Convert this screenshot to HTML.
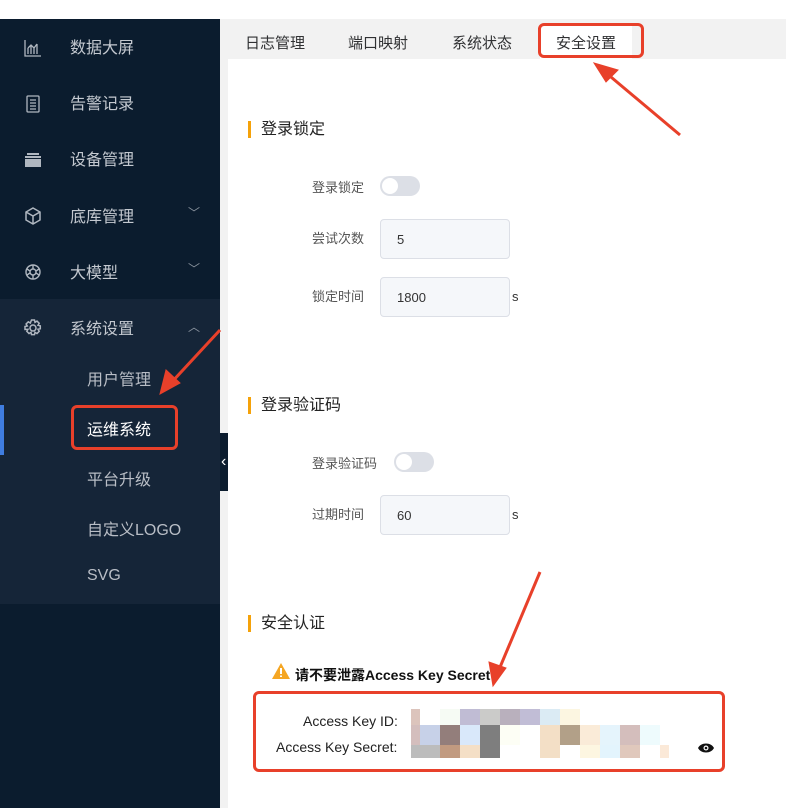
<!DOCTYPE html>
<html><head><meta charset="utf-8"><style>
*{margin:0;padding:0;box-sizing:border-box}
body{width:786px;height:808px;overflow:hidden;position:relative;background:#fff;font-family:"Liberation Sans","Noto Sans CJK SC",sans-serif}
.side{position:absolute;left:0;top:19px;width:220px;height:789px;background:#0b1c2e}
.sub{position:absolute;left:0;top:299px;width:220px;height:305px;background:#152538}
.mi{position:absolute;left:70px;color:#c4c9d0;font-size:16px}
.ic{position:absolute;left:24px;width:18px;height:18px}
.chev{position:absolute;left:188px;color:#8a939e;font-size:12px}
.si{position:absolute;left:87px;color:#b9bec6;font-size:16px}
.main{position:absolute;left:220px;top:19px;width:566px;height:789px;background:#f2f2f2}
.panel{position:absolute;left:228px;top:59px;width:558px;height:749px;background:#fff}
.tab{position:absolute;top:32px;font-size:15px;color:#303133}
.h{position:absolute;left:248px;font-size:16px;color:#222;padding-left:10px;border-left:3px solid #f5a20a;line-height:17px}
.lb{position:absolute;font-size:13px;color:#555}
.sw{position:absolute;width:40px;height:20px;border-radius:10px;background:#dcdfe6}
.sw:after{content:"";position:absolute;left:2px;top:2px;width:16px;height:16px;border-radius:50%;background:#fff}
.in{position:absolute;left:380px;width:130px;height:40px;border:1px solid #dcdfe6;border-radius:4px;background:#f5f7fa;font-size:13px;color:#333;padding:12px 16px}
.red{position:absolute;border:3px solid #e8402a;border-radius:6px}
</style></head><body>
<div class="side"></div><div class="sub"></div>
<div style="position:absolute;left:0;top:405px;width:4px;height:50px;background:#3f7de0"></div>
<svg class="ic" style="top:39px" viewBox="0 0 18 18" fill="none" stroke="#b0b7c0" stroke-width="1.3"><path d="M1 1V17H17M4 15V9M7 15V6M10 15V9M13 15V5M4 9l3-3 3 3 3-4"/></svg>
<span class="mi" style="top:34px">数据大屏</span>
<svg class="ic" style="top:95px" viewBox="0 0 18 18" fill="none" stroke="#b0b7c0" stroke-width="1.3"><rect x="3" y="1" width="12" height="16" rx="1"/><path d="M6 5h6M6 8h6M6 11h6M6 14h6"/></svg>
<span class="mi" style="top:90px">告警记录</span>
<svg class="ic" style="top:151px" viewBox="0 0 18 18" fill="#b0b7c0"><rect x="3" y="2" width="12" height="2"/><rect x="1" y="5" width="16" height="2"/><rect x="1" y="8" width="16" height="8"/></svg>
<span class="mi" style="top:146px">设备管理</span>
<svg class="ic" style="top:207px" viewBox="0 0 18 18" fill="none" stroke="#b0b7c0" stroke-width="1.5"><path d="M9 1l7 4v8l-7 4-7-4V5zM2 5l7 4 7-4M9 9v8"/></svg>
<span class="mi" style="top:203px">底库管理</span><span class="chev" style="top:204px">﹀</span>
<svg class="ic" style="top:263px" viewBox="0 0 18 18" fill="none" stroke="#b0b7c0" stroke-width="1.4"><circle cx="9" cy="9" r="7"/><circle cx="9" cy="9" r="3"/><path d="M9 2v4M15 6l-3 2M15 12l-3-2M9 16v-4M3 12l3-2M3 6l3 2"/></svg>
<span class="mi" style="top:259px">大模型</span><span class="chev" style="top:260px">﹀</span>
<svg class="ic" style="top:319px" viewBox="0 0 18 18" fill="none" stroke="#b0b7c0" stroke-width="1.5"><circle cx="9" cy="9" r="3"/><path d="M7.5 1h3l.5 2.3 2-1.2 2.2 2.2-1.2 2 2.3.5v3l-2.3.5 1.2 2-2.2 2.2-2-1.2-.5 2.3h-3l-.5-2.3-2 1.2-2.2-2.2 1.2-2L1 10.5v-3l2.3-.5-1.2-2 2.2-2.2 2 1.2z"/></svg>
<span class="mi" style="top:315px">系统设置</span><span class="chev" style="top:318px">︿</span>
<span class="si" style="top:366px">用户管理</span>
<span class="si" style="top:416px;color:#fff">运维系统</span>
<span class="si" style="top:466px">平台升级</span>
<span class="si" style="top:516px">自定义LOGO</span>
<span class="si" style="top:567px">SVG</span>
<div class="main"></div>
<div style="position:absolute;left:220px;top:433px;width:15px;height:58px;background:#0b1c2e;color:#fff;font-size:16px;line-height:58px;padding-left:1px">‹</div>
<div class="panel"></div>
<div style="position:absolute;left:540px;top:25px;width:92px;height:34px;background:#fff"></div>
<span class="tab" style="left:245px">日志管理</span>
<span class="tab" style="left:348px">端口映射</span>
<span class="tab" style="left:452px">系统状态</span>
<span class="tab" style="left:556px">安全设置</span>
<div class="red" style="left:538px;top:23px;width:106px;height:35px"></div>
<div class="h" style="top:121px">登录锁定</div>
<span class="lb" style="left:312px;top:177px">登录锁定</span><div class="sw" style="left:380px;top:176px"></div>
<span class="lb" style="left:312px;top:228px">尝试次数</span><div class="in" style="top:219px">5</div>
<span class="lb" style="left:312px;top:286px">锁定时间</span><div class="in" style="top:277px">1800</div><span class="lb" style="left:512px;top:289px;color:#333">s</span>
<div class="h" style="top:397px">登录验证码</div>
<span class="lb" style="left:312px;top:453px">登录验证码</span><div class="sw" style="left:394px;top:452px"></div>
<span class="lb" style="left:312px;top:504px">过期时间</span><div class="in" style="top:495px">60</div><span class="lb" style="left:512px;top:507px;color:#333">s</span>
<div class="h" style="top:615px">安全认证</div>
<svg style="position:absolute;left:272px;top:663px" width="18" height="16" viewBox="0 0 18 16"><path d="M9 0L18 16H0z" fill="#f5a623"/><path d="M9 5v6M9 12.5v1.5" stroke="#fff" stroke-width="2"/></svg>
<span style="position:absolute;left:295px;top:665px;font-size:14px;font-weight:bold;color:#111">请不要泄露Access Key Secret</span>
<div class="red" style="left:253px;top:691px;width:472px;height:81px"></div>
<span style="position:absolute;left:303px;top:713px;font-size:14px;color:#222">Access Key ID:</span>
<span style="position:absolute;left:276px;top:739px;font-size:14px;color:#222">Access Key Secret:</span>
<svg style="position:absolute;left:411px;top:709px" width="260" height="50">
<g><rect x="0" y="0" width="9" height="16" fill="#dcc4bc"/><rect x="29" y="0" width="20" height="16" fill="#f6fbf4"/><rect x="49" y="0" width="20" height="16" fill="#c0bcd4"/><rect x="69" y="0" width="20" height="16" fill="#cbcbc9"/><rect x="89" y="0" width="20" height="16" fill="#b9b0bd"/><rect x="109" y="0" width="20" height="16" fill="#c1bdd6"/><rect x="129" y="0" width="20" height="16" fill="#dbebf4"/><rect x="149" y="0" width="20" height="16" fill="#fcf6e1"/>
<rect x="0" y="16" width="9" height="20" fill="#d4bebd"/><rect x="9" y="16" width="20" height="20" fill="#c7d1e8"/><rect x="29" y="16" width="20" height="20" fill="#937e7b"/><rect x="49" y="16" width="20" height="20" fill="#d9e8fa"/><rect x="69" y="16" width="20" height="20" fill="#7e7e7e"/><rect x="89" y="16" width="20" height="20" fill="#fdfef5"/><rect x="129" y="16" width="20" height="20" fill="#f3dfc6"/><rect x="149" y="16" width="20" height="20" fill="#b2a088"/><rect x="169" y="16" width="20" height="20" fill="#faebd8"/><rect x="189" y="16" width="20" height="20" fill="#e5f4fc"/><rect x="209" y="16" width="20" height="20" fill="#d4bebc"/><rect x="229" y="16" width="20" height="20" fill="#eefbfd"/>
<rect x="0" y="36" width="29" height="13" fill="#bcbcbc"/><rect x="29" y="36" width="20" height="13" fill="#c19a80"/><rect x="49" y="36" width="20" height="13" fill="#f4dfc6"/><rect x="69" y="36" width="20" height="13" fill="#7e7e7e"/><rect x="129" y="36" width="20" height="13" fill="#f3dfc6"/><rect x="169" y="36" width="20" height="13" fill="#fdf6e1"/><rect x="189" y="36" width="20" height="13" fill="#e3f4fd"/><rect x="209" y="36" width="20" height="13" fill="#e0c8bc"/><rect x="249" y="36" width="9" height="13" fill="#fbe9d8"/></g></svg>
<svg style="position:absolute;left:697px;top:742px" width="18" height="12" viewBox="0 0 18 12"><path d="M1 6C4 0 14 0 17 6C14 12 4 12 1 6z" fill="#111"/><circle cx="9" cy="6" r="2.5" fill="#fff"/><circle cx="9" cy="6" r="1.3" fill="#111"/></svg>
<div class="red" style="left:71px;top:405px;width:107px;height:45px"></div>
<svg style="position:absolute;left:0;top:0" width="786" height="808">
<g stroke="#e8402a" stroke-width="3" fill="#e8402a">
<line x1="680" y1="135" x2="605" y2="72"/><path d="M594 63L618 70L606 82z" stroke-width="1"/>
<line x1="220" y1="330" x2="170" y2="384"/><path d="M160 394L166 370L180 383z" stroke-width="1"/>
<line x1="540" y1="572" x2="498" y2="672"/><path d="M493 686L489 662L506 668z" stroke-width="1"/>
</g></svg>
</body></html>
